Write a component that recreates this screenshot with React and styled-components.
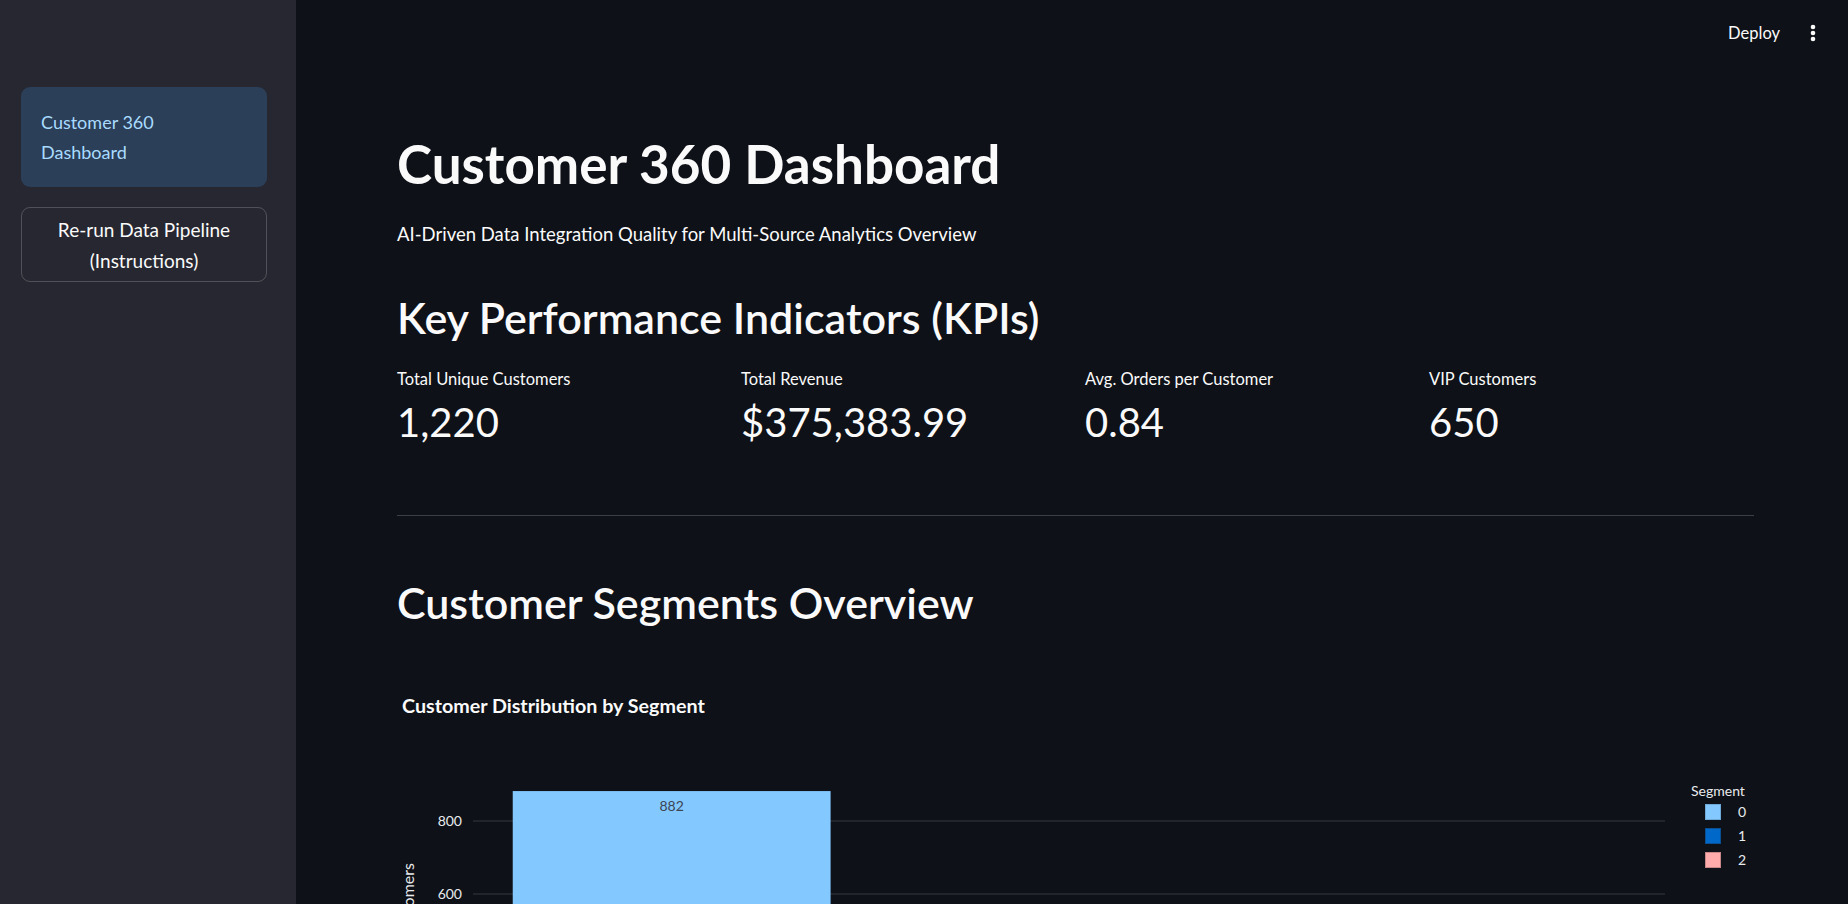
import React from 'react';
import styled, { createGlobalStyle } from 'styled-components';

const GlobalStyle = createGlobalStyle`
  html, body {
    margin: 0;
    padding: 0;
    background: #0e1117;
    color: #fafafa;
    font-family: Lato, "Noto Sans", sans-serif;
  }
`;

const Shell = styled.div`
  display: flex;
  min-height: 100vh;
`;

const Sidebar = styled.aside`
  width: 296px;
  flex-shrink: 0;
  background: #262730;
  box-sizing: border-box;
  padding: 87px 29px 0 21px;
  display: flex;
  flex-direction: column;
  gap: 20px;
`;

const NavItem = styled.div`
  height: 100px;
  box-sizing: border-box;
  border-radius: 9px;
  background: #2b3f58;
  color: #a9dbff;
  padding: 0 20px;
  display: flex;
  align-items: center;
  font-size: 18px;
  line-height: 30px;
`;

const NavText = styled.span`
  max-width: 130px;
`;

const SideButton = styled.button`
  height: 75px;
  border-radius: 9px;
  border: 1px solid rgba(250, 250, 250, 0.2);
  background: transparent;
  color: #fafafa;
  font-family: inherit;
  font-size: 19px;
  line-height: 31px;
  text-align: center;
  padding: 0 16px;
`;

const Main = styled.main`
  flex: 1;
  min-width: 0;
`;

const Header = styled.header`
  height: 66px;
  display: flex;
  justify-content: flex-end;
  align-items: center;
  gap: 28px;
  padding-right: 30px;
`;

const HeaderLink = styled.span`
  font-size: 16.5px;
  color: #fafafa;
`;

const Content = styled.div`
  padding: 68px 94px 40px 101px;
`;

const Title = styled.h1`
  margin: 0;
  font-size: 53px;
  font-weight: 700;
  line-height: 60px;
`;

const Subtitle = styled.p`
  margin: 25px 0 0;
  font-size: 18.5px;
  line-height: 30px;
`;

const SectionTitle = styled.h2`
  margin: ${(p) => p.$top}px 0 0;
  font-size: 43px;
  font-weight: 600;
  line-height: 52px;
`;

const Metrics = styled.div`
  display: grid;
  grid-template-columns: repeat(4, 1fr);
  gap: 19px;
  margin-top: 24px;
`;

const Metric = styled.div`
  display: flex;
  flex-direction: column;
  gap: 7px;
`;

const MetricLabel = styled.div`
  font-size: 16.5px;
  line-height: 22px;
`;

const MetricValue = styled.div`
  font-size: 40px;
  line-height: 50px;
`;

const Divider = styled.hr`
  margin: 68px 0 0;
  border: none;
  border-top: 1px solid rgba(250, 250, 250, 0.2);
`;

const ChartBox = styled.div`
  margin-top: 31px;
`;

const Kebab = () => (
  <svg width="10" height="20" viewBox="0 0 10 20">
    <circle cx="5" cy="4" r="2.3" fill="#fafafa" />
    <circle cx="5" cy="10" r="2.3" fill="#fafafa" />
    <circle cx="5" cy="16" r="2.3" fill="#fafafa" />
  </svg>
);

const segments = [
  { id: 0, count: 882, color: '#83c9ff', edge: '#6fa9d8' },
  { id: 1, count: 249, color: '#0068c9', edge: '#0a4f91' },
  { id: 2, count: 89, color: '#ffabab', edge: '#c98686' },
];

const FONT = 'Lato, sans-serif';

function SegmentChart() {
  const left = 76;
  const right = 1268;
  const zeroY = 453;
  const scale = 0.365;
  const band = (right - left) / segments.length;
  const y = (v) => zeroY - v * scale;
  return (
    <svg width="1353" height="520" viewBox="0 0 1353 520">
      <text x="5" y="53" fill="#fafafa" fontSize="19.7" fontWeight="700" fontFamily={FONT}>
        Customer Distribution by Segment
      </text>
      {[0, 200, 400, 600, 800].map((v) => (
        <g key={v}>
          <line x1={left} x2={right} y1={y(v)} y2={y(v)} stroke="#363942" strokeWidth="1" />
          <text x="65" y={y(v) + 5} textAnchor="end" fill="#e8eaee" fontSize="14" fontFamily={FONT}>
            {v}
          </text>
        </g>
      ))}
      {segments.map((s, i) => {
        const bx = left + i * band + band * 0.1;
        const bw = band * 0.8;
        return (
          <g key={s.id}>
            <rect x={bx} y={y(s.count)} width={bw} height={s.count * scale} fill={s.color} />
            <text
              x={bx + bw / 2}
              y={y(s.count) + 20}
              textAnchor="middle"
              fill={i === 1 ? '#ffffff' : '#3d4452'}
              fontSize="14"
              fontFamily={FONT}
            >
              {s.count}
            </text>
            <text x={bx + bw / 2} y={zeroY + 22} textAnchor="middle" fill="#e8eaee" fontSize="14" fontFamily={FONT}>
              {s.id}
            </text>
          </g>
        );
      })}
      <text
        x="17"
        y="203"
        transform="rotate(-90 17 203)"
        textAnchor="end"
        fill="#e8eaee"
        fontSize="16"
        fontFamily={FONT}
      >
        Number of Customers
      </text>
      <text x={(left + right) / 2} y="505" textAnchor="middle" fill="#e8eaee" fontSize="16" fontFamily={FONT}>
        Segment
      </text>
      <text x="1294" y="136" fill="#e8eaee" fontSize="14" fontFamily={FONT}>
        Segment
      </text>
      {segments.map((s, i) => (
        <g key={s.id}>
          <rect x="1308.5" y={144.5 + i * 24} width="15" height="15" fill={s.color} stroke={s.edge} strokeWidth="1" />
          <text x="1341" y={157 + i * 24} fill="#e8eaee" fontSize="14" fontFamily={FONT}>
            {s.id}
          </text>
        </g>
      ))}
    </svg>
  );
}

const kpis = [
  { label: 'Total Unique Customers', value: '1,220' },
  { label: 'Total Revenue', value: '$375,383.99' },
  { label: 'Avg. Orders per Customer', value: '0.84' },
  { label: 'VIP Customers', value: '650' },
];

export default function App() {
  return (
    <>
      <GlobalStyle />
      <Shell>
        <Sidebar>
          <NavItem>
            <NavText>Customer 360 Dashboard</NavText>
          </NavItem>
          <SideButton>
            Re-run Data Pipeline
            <br />
            (Instructions)
          </SideButton>
        </Sidebar>
        <Main>
          <Header>
            <HeaderLink>Deploy</HeaderLink>
            <Kebab />
          </Header>
          <Content>
            <Title>Customer 360 Dashboard</Title>
            <Subtitle>AI-Driven Data Integration Quality for Multi-Source Analytics Overview</Subtitle>
            <SectionTitle $top={43}>Key Performance Indicators (KPIs)</SectionTitle>
            <Metrics>
              {kpis.map((k) => (
                <Metric key={k.label}>
                  <MetricLabel>{k.label}</MetricLabel>
                  <MetricValue>{k.value}</MetricValue>
                </Metric>
              ))}
            </Metrics>
            <Divider />
            <SectionTitle $top={61}>Customer Segments Overview</SectionTitle>
            <ChartBox>
              <SegmentChart />
            </ChartBox>
          </Content>
        </Main>
      </Shell>
    </>
  );
}
